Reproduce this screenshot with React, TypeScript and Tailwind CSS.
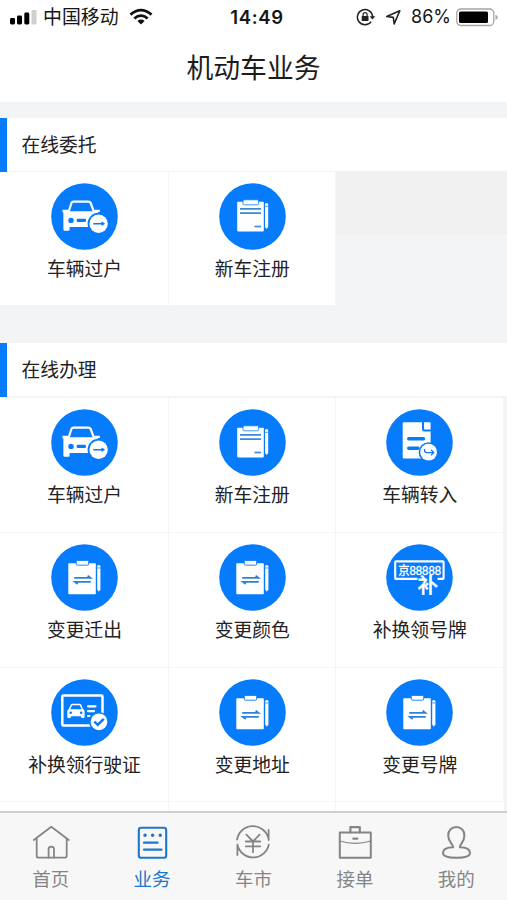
import type { ReactNode } from "react";

type IconName = "car" | "register" | "transferIn" | "change" | "plate" | "license";

const BLUE = "#067bfb";

function Glyph({ name }: { name: IconName }) {
  switch (name) {
    case "car":
      return (
        <>
          <path d="M17.5 29 L20.5 19.8 Q21 18.6 22.5 18.6 H37.5 Q39 18.6 39.6 19.8 L43 29" fill="none" stroke="#fff" strokeWidth="2.2" />
          <path d="M11.5 26.8 H16.5 L18 28.2 H42.5 L44 26.8 H48.8 V29 H47 V44 H18.6 V46.4 Q18.6 47.8 17.2 47.8 H13.8 Q12.4 47.8 12.4 46.4 V29.4 H11.5 Z" fill="#fff" />
          <circle cx="20" cy="37.4" r="2.7" fill={BLUE} />
          <rect x="25.6" y="35.8" width="9.4" height="3.2" rx="1.2" fill={BLUE} />
          <circle cx="47.6" cy="40.7" r="11" fill={BLUE} />
          <circle cx="47.6" cy="40.7" r="9.2" fill="#fff" />
          <path d="M42.3 40.7 H52.6 M50.6 39.2 L52.8 40.7 L50.6 42.2" fill="none" stroke={BLUE} strokeWidth="1.4" />
        </>
      );
    case "register":
      return (
        <>
          <rect x="18.2" y="18.8" width="26.6" height="29.6" rx="0.8" fill="#fff" />
          <rect x="24" y="16.8" width="15.6" height="5" rx="1.2" fill="#fff" stroke={BLUE} strokeWidth="0.8" />
          <path d="M21 25.8 H42 M21 30.2 H42" stroke="#398ad8" strokeWidth="1.7" />
          <path d="M35.4 43.5 H42" stroke="#398ad8" strokeWidth="1.7" />
          <path d="M46 21 Q47.6 19.2 49.2 21 V44 L47.6 46 L46 44 Z" fill="#fff" />
          <path d="M46 23.3 H49.2" stroke={BLUE} strokeWidth="0.7" />
        </>
      );
    case "transferIn":
      return (
        <>
          <path d="M17.6 13.3 H36 V20 Q36 22.5 38.5 22.5 H44.6 V49.5 H17.6 Q16.7 49.5 16.7 48.6 V14.2 Q16.7 13.3 17.6 13.3 Z" fill="#fff" />
          <path d="M38 13.3 H43.8 Q44.6 13.3 44.6 14.1 V20.5 H38.8 Q38 20.5 38 19.7 Z" fill="#fff" />
          <path d="M22.8 29.8 H37.4 M22.8 39.3 H32" stroke={BLUE} strokeWidth="3.6" strokeLinecap="round" />
          <circle cx="42.6" cy="43.2" r="10" fill={BLUE} />
          <circle cx="42.6" cy="43.2" r="8.4" fill="#fff" />
          <path d="M38.6 40 V41.5 Q38.6 43.6 40.7 43.6 H47.4 M45.1 41 L47.7 43.6 L45.1 46.2" fill="none" stroke={BLUE} strokeWidth="1.3" />
        </>
      );
    case "change":
      return (
        <>
          <rect x="17.3" y="19.2" width="27.5" height="31" rx="0.8" fill="#fff" />
          <rect x="25.3" y="16.4" width="12.4" height="4.8" rx="1.2" fill="#fff" stroke={BLUE} strokeWidth="0.9" />
          <path d="M23.2 33.9 H39.5 L36.6 31.8 M39.8 37.8 H23.8 L26.7 40" fill="none" stroke="#2c82d8" strokeWidth="1.7" />
          <path d="M46.2 21.8 Q47.8 20 49.4 21.8 V45.6 L47.8 47.8 L46.2 45.6 Z" fill="#fff" />
          <path d="M46.2 24 H49.4" stroke={BLUE} strokeWidth="0.7" />
        </>
      );
    case "plate":
      return (
        <>
          <path d="M31.5 34.9 H10 Q9.2 34.9 9.2 34.1 V18.2 Q9.2 17.4 10 17.4 H56.8 Q57.6 17.4 57.6 18.2 V34.1 Q57.6 34.9 56.8 34.9 H51.5" fill="none" stroke="#fff" strokeWidth="2.1" />
          <text x="12.2" y="30.6" textLength="42.8" lengthAdjust="spacingAndGlyphs" fill="#fff" stroke="#fff" strokeWidth="0.35" className="font-['Liberation_Sans','Noto_Sans_CJK_SC',sans-serif] text-[12px]">京88888</text>
          <text x="31.8" y="48.8" fill="#fff" stroke="#fff" strokeWidth="0.8" className="font-['Noto_Sans_CJK_SC',sans-serif] text-[20px]">补</text>
        </>
      );
    case "license":
      return (
        <>
          <rect x="11.3" y="16.6" width="40.2" height="30" rx="1" fill="none" stroke="#fff" strokeWidth="2.5" />
          <path d="M18.2 31 L20.2 26.4 Q20.6 25.6 21.5 25.6 H28.4 Q29.3 25.6 29.7 26.4 L31.7 31" fill="none" stroke="#fff" strokeWidth="1.5" />
          <path d="M17.5 30.3 H32.4 Q33.6 31 33.6 32.4 V38 Q33.6 39 32.6 39 H31 Q30 39 30 38 V37.2 H20 V38 Q20 39 19 39 H17.3 Q16.3 39 16.3 38 V32.4 Q16.3 31 17.5 30.3 Z" fill="#fff" />
          <circle cx="19.7" cy="33.8" r="1.3" fill={BLUE} />
          <circle cx="30.2" cy="33.8" r="1.3" fill={BLUE} />
          <path d="M37 27.3 H44.5 M37 32.2 H43 M37 37 H38.5" stroke="#fff" strokeWidth="2.2" strokeLinecap="round" />
          <circle cx="48" cy="42.8" r="9.9" fill={BLUE} />
          <circle cx="48" cy="42.8" r="8.4" fill="#fff" />
          <path d="M43.4 42.6 L46.8 45.8 L52.8 39.8" fill="none" stroke={BLUE} strokeWidth="2.5" />
        </>
      );
  }
}

function Cell({ icon, label }: { icon: IconName; label: string }) {
  return (
    <div className="flex h-full flex-col items-center border-r border-b border-[#f5f5f6] bg-white pt-[11px] pl-[1.5px]">
      <svg viewBox="0 0 67 67" className="size-[67px] shrink-0">
        <circle cx="33.5" cy="33.5" r="33.3" fill={BLUE} />
        <Glyph name={icon} />
      </svg>
      <span className="mt-[7px] text-[18.8px] leading-[26px] whitespace-nowrap text-[#222]">{label}</span>
    </div>
  );
}

function SectionHead({ title }: { title: string }) {
  return (
    <div className="flex h-[54px] shrink-0 items-center border-b border-[#f5f5f6] bg-white">
      <div className="h-[54px] w-[7px] bg-[#067bfb]" />
      <h2 className="mt-[2px] ml-[14.5px] text-[18.8px] leading-[27px] font-normal text-[#222]">{title}</h2>
    </div>
  );
}

function Tab({ label, active = false, children }: { label: string; active?: boolean; children: ReactNode }) {
  return (
    <div className={`flex flex-col items-center pt-[8.5px] ${active ? "text-[#1c78cb]" : "text-[#858585]"}`}>
      <svg viewBox="0 0 40 40" className="size-10" fill="none" stroke="currentColor" strokeWidth="1.8" strokeLinejoin="round" strokeLinecap="round">
        {children}
      </svg>
      <span className="mt-[4px] text-[18.5px] leading-[27px]">{label}</span>
    </div>
  );
}

function StatusBar() {
  return (
    <div className="grid h-[34px] shrink-0 grid-cols-[1fr_auto_1fr] items-center bg-white text-[#161616]">
      <div className="flex items-center pl-[10px]">
        <svg viewBox="0 0 27 16" className="h-4 w-[27px]">
          <rect x="0" y="9" width="5" height="6.5" rx="1.4" />
          <rect x="7" y="6.5" width="5" height="9" rx="1.4" />
          <rect x="14.3" y="3.5" width="5" height="12" rx="1.4" />
          <rect x="21.5" y="1" width="5" height="14.5" rx="1.4" fill="#cfcfcf" />
        </svg>
        <span className="mt-[2px] ml-[6px] text-[18.9px] leading-[28px]">中国移动</span>
        <svg viewBox="0 0 24 18" className="ml-[10px] h-[18px] w-6" fill="none" stroke="#111" strokeWidth="2.8">
          <path d="M1.5 6.6 Q12 -2.4 22.5 6.6" />
          <path d="M5.3 10.5 Q12 4.8 18.7 10.5" />
          <path d="M8.4 13 Q12 10.1 15.6 13 L12 16.6 Z" fill="#111" stroke="none" />
        </svg>
      </div>
      <span className="pl-[7px] font-['Inter',sans-serif] text-[18.5px] leading-6 font-semibold tracking-[0.65px]">14:49</span>
      <div className="flex items-center justify-end pr-[8px]">
        <svg viewBox="0 0 20 18" className="h-[18px] w-5" fill="none" stroke="#222" strokeWidth="1.5">
          <path d="M15.2 13.6 A7.6 7.6 0 1 1 16.6 8.8" />
          <path d="M13.6 8.2 H19.3 L16.5 11.6 Z" fill="#222" stroke="none" />
          <rect x="5.7" y="8" width="6.8" height="4.9" rx="0.6" fill="#222" stroke="none" />
          <path d="M7.1 8.4 V6.7 A2 2 0 0 1 11.1 6.7 V8.4" strokeWidth="1.2" />
        </svg>
        <svg viewBox="0 0 18 18" className="ml-[9px] h-[18px] w-[18px]" fill="none" stroke="#222" strokeWidth="1.6" strokeLinejoin="round">
          <path d="M1.7 8.5 L14.8 2.7 L9.2 15.9 L8.3 9.4 Z" />
        </svg>
        <span className="ml-[8px] font-['Inter',sans-serif] text-[18px] leading-6">86%</span>
        <svg viewBox="0 0 43 19" className="ml-[5px] h-[19px] w-[43px]">
          <rect x="0.8" y="1" width="37" height="16.5" rx="4" fill="#fff" stroke="#a5a5a5" strokeWidth="1.3" />
          <rect x="3" y="3.5" width="29" height="11.6" rx="1.5" fill="#000" />
          <path d="M39.5 6.8 Q41.8 7.5 41.8 9.4 Q41.8 11.3 39.5 12 Z" fill="#aaa" />
        </svg>
      </div>
    </div>
  );
}

const services: { icon: IconName; label: string }[] = [
  { icon: "car", label: "车辆过户" },
  { icon: "register", label: "新车注册" },
  { icon: "transferIn", label: "车辆转入" },
  { icon: "change", label: "变更迁出" },
  { icon: "change", label: "变更颜色" },
  { icon: "plate", label: "补换领号牌" },
  { icon: "license", label: "补换领行驶证" },
  { icon: "change", label: "变更地址" },
  { icon: "change", label: "变更号牌" },
];

export default function App() {
  return (
    <div className="flex h-[900px] w-[507px] flex-col overflow-hidden bg-[#f2f4f6] font-['Liberation_Sans','Noto_Sans_CJK_SC',sans-serif]">
      <StatusBar />
      <header className="flex h-[68px] shrink-0 items-center justify-center bg-white pt-[2px]">
        <h1 className="text-[26.8px] leading-[40px] font-normal text-[#1c1c1c]">机动车业务</h1>
      </header>

      <section className="mt-4 shrink-0">
        <SectionHead title="在线委托" />
        <div className="grid h-[134px] grid-cols-[168.5px_167px_1fr]">
          <Cell icon="car" label="车辆过户" />
          <Cell icon="register" label="新车注册" />
          <div className="h-[62px] bg-[#f0f0f0]" />
        </div>
      </section>

      <section className="mt-[37px] flex min-h-0 flex-1 flex-col overflow-hidden">
        <SectionHead title="在线办理" />
        <div className="grid shrink-0 grid-cols-[168.5px_167px_168px] grid-rows-[135px_134.5px_134.5px_134px] pt-px">
          {services.map((s) => (
            <Cell key={s.label} icon={s.icon} label={s.label} />
          ))}
          <div className="border-r border-[#f5f5f6] bg-white" />
          <div className="border-r border-[#f5f5f6] bg-white" />
          <div className="bg-white" />
        </div>
      </section>

      <nav className="grid h-[89px] shrink-0 grid-cols-5 border-t-2 border-[#cfcfd0] bg-[#f7f7f7]">
        <Tab label="首页">
          <path d="M2.8 18 L20.3 4.8 L37.8 18" />
          <path d="M5.7 17 V33.7 Q5.7 35.7 7.7 35.7 H33.7 Q35.7 35.7 35.7 33.7 V17" />
          <path d="M17.6 35.5 V27.2 Q17.6 24.7 20.3 24.7 Q23 24.7 23 27.2 V35.5" />
        </Tab>
        <Tab label="业务" active>
          <rect x="6.8" y="5.8" width="27.4" height="30" rx="2.4" strokeWidth="2.1" />
          <path d="M13 13.3 H13.1 M20.6 13.3 H20.7 M28.2 13.3 H28.3" strokeWidth="3.4" />
          <path d="M12 20.7 H25.6 M12 27.7 H29.5" strokeWidth="2.2" />
        </Tab>
        <Tab label="车市">
          <path d="M4.1 17.5 A16 16 0 0 1 35.2 15.5 M35.6 8 V18" />
          <path d="M4.4 33 V22.5 A16 16 0 0 0 35.8 22.6" />
          <path d="M13.4 12.7 L20 19.5 L26.6 12.7 M20 19.5 V30.2 M12.8 19.5 H27.2 M12.8 24.3 H27.2" />
        </Tab>
        <Tab label="接单">
          <rect x="4.8" y="10.4" width="31" height="25.4" strokeWidth="2" />
          <path d="M15.4 10.4 V5.2 H24.8 V10.4" strokeWidth="2.2" />
          <path d="M4.8 19 Q20.3 23.6 35.8 19" strokeWidth="1.2" />
          <path d="M18.3 16.7 H22.3" strokeWidth="2.2" />
        </Tab>
        <Tab label="我的">
          <path d="M17.2 25.2 C17.2 22 12.2 20.2 12.2 13.4 C12.2 8.2 15.8 5 20.3 5 C24.8 5 28.4 8.2 28.4 13.4 C28.4 20.2 23.8 22 23.8 25.2 C29.8 25.2 34 27.3 34 31 C34 34.5 28.3 35.8 20.5 35.8 C12.7 35.8 7 34.5 7 31 C7 27.3 11.2 25.2 17.2 25.2" strokeWidth="2" />
        </Tab>
      </nav>
    </div>
  );
}
